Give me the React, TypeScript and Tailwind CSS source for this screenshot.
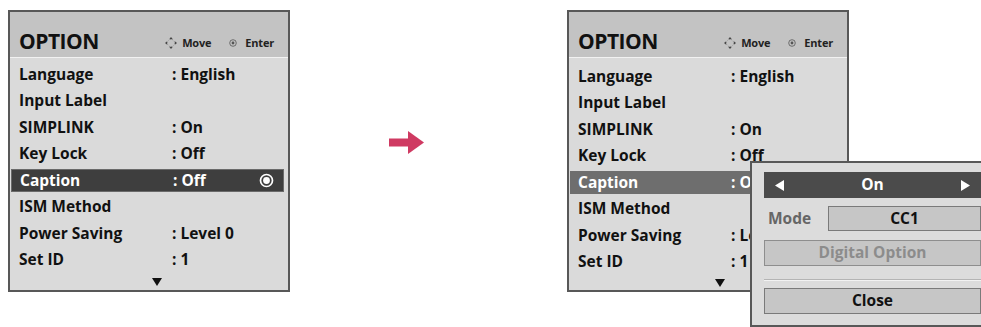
import React from "react";

type Row = { label: string; value?: string };

const rows: Row[] = [
  { label: "Language", value: ": English" },
  { label: "Input Label" },
  { label: "SIMPLINK", value: ": On" },
  { label: "Key Lock", value: ": Off" },
  { label: "Caption", value: ": Off" },
  { label: "ISM Method" },
  { label: "Power Saving", value: ": Level 0" },
  { label: "Set ID", value: ": 1" },
];

function MoveIcon() {
  return (
    <svg width="12" height="12" viewBox="0 0 12 12">
      <circle cx="6" cy="6" r="3.6" fill="none" stroke="#9a9a9a" strokeWidth="0.8" strokeDasharray="1.2 1" />
      <polygon points="6,0 4.2,2.2 7.8,2.2" fill="#444" />
      <polygon points="6,12 4.2,9.8 7.8,9.8" fill="#444" />
      <polygon points="0,6 2.2,4.2 2.2,7.8" fill="#444" />
      <polygon points="12,6 9.8,4.2 9.8,7.8" fill="#444" />
    </svg>
  );
}

function EnterIcon() {
  return (
    <svg width="8" height="8" viewBox="0 0 8 8">
      <circle cx="4" cy="4" r="3.3" fill="none" stroke="#555" strokeWidth="0.8" />
      <circle cx="4" cy="4" r="1.4" fill="#555" />
    </svg>
  );
}

function Radio() {
  return (
    <svg width="15" height="15" viewBox="0 0 15 15">
      <circle cx="7.5" cy="7.5" r="6" fill="none" stroke="#fff" strokeWidth="1.7" />
      <circle cx="7.5" cy="7.5" r="3.4" fill="#fff" />
    </svg>
  );
}

function OptionPanel({
  variant,
  children,
}: {
  variant: "dark" | "mid";
  children?: React.ReactNode;
}) {
  const dark = variant === "dark";
  return (
    <div className="relative flex h-[282px] w-[282px] shrink-0 flex-col border-2 border-[#585858] bg-[#dadada]">
      <div className="flex h-[46px] items-end border-b border-[#f2f2f2] bg-[#c3c3c3] pb-[4px] pl-[9px] pr-[14px]">
        <span className="text-[21px] leading-[24px] font-bold tracking-[-0.5px] text-[#111]">
          OPTION
        </span>
        <div className="mb-[4px] ml-auto flex items-center text-[11px] leading-[13px] font-bold tracking-[-0.2px] text-[#222]">
          <MoveIcon />
          <span className="ml-[5px]">Move</span>
          <span className="ml-[18px]">
            <EnterIcon />
          </span>
          <span className="ml-[8px]">Enter</span>
        </div>
      </div>
      <div className={`flex flex-1 flex-col pl-[1px] pr-[4px] ${dark ? "pt-[3px]" : "pt-[5px]"}`}>
        {rows.map((r) => {
          const sel = r.label === "Caption";
          return (
            <div key={r.label} className="flex h-[26.5px] items-center">
              <div
                className={`flex h-[23px] w-full items-center pl-[8px] text-[15.5px] font-bold ${
                  sel
                    ? dark
                      ? "border border-[#6a6a6a] bg-[#3e3e3e] text-white"
                      : "bg-[#6e6e6e] text-white"
                    : "text-[#111]"
                }`}
              >
                <span className="w-[153px] shrink-0">{r.label}</span>
                <span>{r.value}</span>
                {sel && dark && (
                  <span className="ml-auto mr-[9px] flex">
                    <Radio />
                  </span>
                )}
              </div>
            </div>
          );
        })}
        <div className={`flex flex-1 items-center ${dark ? "pl-[141px]" : "pl-[145px]"}`}>
          <svg width="10" height="8" viewBox="0 0 10 8">
            <polygon points="0,0 10,0 5,8" fill="#111" />
          </svg>
        </div>
      </div>
      {children}
    </div>
  );
}

function CaptionPopup() {
  return (
    <div className="absolute left-[181px] top-[149px] flex h-[166px] w-[245px] flex-col border-2 border-[#585858] bg-[#dcdcdc] px-[12px] pt-[9px] text-[15.5px] font-bold">
      <div className="flex h-[26px] items-center bg-[#4b4b4b] px-[11px] text-white">
        <svg width="9" height="11" viewBox="0 0 9 11">
          <polygon points="9,0 9,11 0,5.5" fill="#fff" />
        </svg>
        <span className="flex-1 text-center">On</span>
        <svg width="9" height="11" viewBox="0 0 9 11">
          <polygon points="0,0 0,11 9,5.5" fill="#fff" />
        </svg>
      </div>
      <div className="mt-[8px] flex h-[25px] items-center">
        <span className="w-[64px] shrink-0 pl-[4px] text-[#666]">Mode</span>
        <div className="flex h-full flex-1 items-center justify-center border border-[#7a7a7a] bg-[#c6c6c6] text-[#111]">
          CC1
        </div>
      </div>
      <div className="mt-[9px] flex h-[26px] items-center justify-center border border-[#8e8e8e] bg-[#c6c6c6] text-[#8c8c8c]">
        Digital Option
      </div>
      <div className="mt-[13px] border-t border-[#b4b4b4] border-b border-b-[#f2f2f2]" />
      <div className="mt-[7px] flex h-[26px] items-center justify-center border border-[#7a7a7a] bg-[#c6c6c6] text-[#111]">
        Close
      </div>
    </div>
  );
}

export default function App() {
  return (
    <div className="flex h-[327px] w-[981px] overflow-hidden bg-white pl-[8px] pt-[10px] font-['Open_Sans',sans-serif]">
      <OptionPanel variant="dark" />
      <div className="ml-[99px] mt-[121px] shrink-0">
        <svg width="35" height="23" viewBox="0 0 35 23">
          <rect x="0" y="7.5" width="20" height="8" fill="#cf3a62" />
          <polygon points="19,0 35,11.5 19,23" fill="#cf3a62" />
        </svg>
      </div>
      <div className="ml-[143px]">
        <OptionPanel variant="mid">
          <CaptionPopup />
        </OptionPanel>
      </div>
    </div>
  );
}
